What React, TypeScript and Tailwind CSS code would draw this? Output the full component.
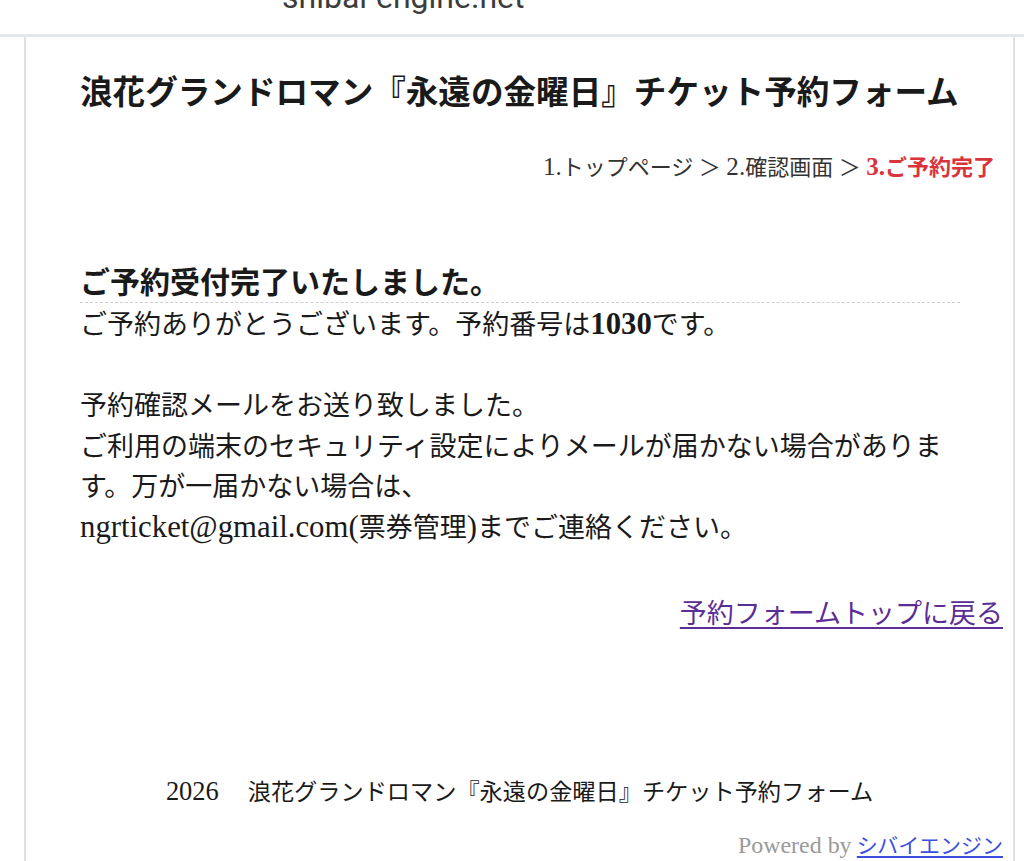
import React from "react";

const serifJa = {
  fontFamily: "'Liberation Serif', 'Noto Sans CJK JP', serif",
};

// Latin runs are set a little larger so the serif matches the x-height of the CJK text
const L = ({ children, bold }: { children: React.ReactNode; bold?: boolean }) => (
  <span className={bold ? "text-[1.14em] leading-none font-bold" : "text-[1.14em] leading-none"}>
    {children}
  </span>
);

export default function App() {
  return (
    <div className="min-h-[861px] w-[1024px] overflow-hidden bg-white text-[#1a1a1a]" style={serifJa}>
      {/* browser address strip, mostly scrolled off */}
      <div className="h-[34px] overflow-hidden border-b-[3px] border-[#e3e8ee] box-content">
        <div
          className="ml-[282px] -mt-[19px] text-[32px] leading-[32px] text-[#3c3c3c]"
          style={{ fontFamily: "Roboto, 'Noto Sans', sans-serif" }}
        >
          shibai-engine.net
        </div>
      </div>

      <div className="ml-[24px] w-[991px] min-h-[824px] border-x-2 border-[#e0e0e0]">
        <h1 className="pl-[54px] pt-[34px] text-[32.6px] leading-[44px] font-bold whitespace-nowrap">
          浪花グランドロマン『永遠の金曜日』チケット予約フォーム
        </h1>

        <div className="mt-[39px] pr-[18px] text-right text-[22px] leading-[28px] text-[#333]">
          <L>1.</L>トップページ ＞ <L>2.</L>確認画面 ＞{" "}
          <span className="font-bold text-[#d9343c]">
            <L>3.</L>ご予約完了
          </span>
        </div>

        <div className="mt-[82px] ml-[54px] w-[880px]">
          <h2 className="text-[30px] leading-[38px] font-bold border-b border-dashed border-[#cfcfcf]">
            ご予約受付完了いたしました。
          </h2>
          <div className="mt-[2px] text-[27px] leading-[40.5px]">
            <p>
              ご予約ありがとうございます。予約番号は<L bold>1030</L>です。
            </p>
            <br className="leading-[42px]" />
            <p>予約確認メールをお送り致しました。</p>
            <p>
              ご利用の端末のセキュリティ設定によりメールが届かない場合があります。万が一届かない場合は、
            </p>
            <p>
              <L>ngrticket@gmail.com(</L>票券管理<L>)</L>までご連絡ください。
            </p>
          </div>
        </div>

        <div className="mt-[46px] pr-[10px] text-right text-[27px] leading-[40px]">
          <a href="#" className="text-[#5b2d96] underline underline-offset-[4px]">
            予約フォームトップに戻る
          </a>
        </div>

        <div className="mt-[143px] text-center text-[23.2px] leading-[30px]">
          <L>2026</L>
          {"\u3000 "}浪花グランドロマン『永遠の金曜日』チケット予約フォーム
        </div>

        <div className="mt-[24px] pr-[10px] text-right text-[21px] leading-[30px]">
          <span className="text-[#9a9a9a]">
            <L>Powered by</L>{" "}
          </span>
          <a href="#" className="text-[#3b4fe0] underline underline-offset-[3px]">
            シバイエンジン
          </a>
        </div>
      </div>
    </div>
  );
}
